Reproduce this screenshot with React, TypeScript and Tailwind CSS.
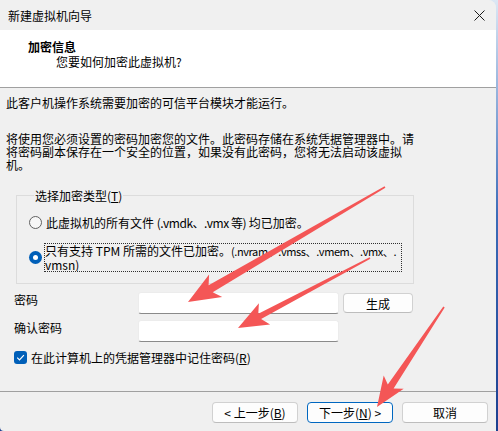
import React from 'react';

// tapered red pointer: thin tail at (sx, sy), head tip at (tx, ty)
function arrowPoints(sx: number, sy: number, tx: number, ty: number, head = 30, wing = 12, neck = 3.5, tail = 0.8) {
  const dx = sx - tx;
  const dy = sy - ty;
  const len = Math.hypot(dx, dy);
  const ux = dx / len;
  const uy = dy / len;
  const nx = -uy;
  const ny = ux;
  const bx = tx + ux * head;
  const by = ty + uy * head;
  const ix = tx + ux * head * 0.82;
  const iy = ty + uy * head * 0.82;
  const pts = [
    [sx + nx * tail, sy + ny * tail],
    [ix + nx * neck, iy + ny * neck],
    [bx + nx * wing, by + ny * wing],
    [tx, ty],
    [bx - nx * wing, by - ny * wing],
    [ix - nx * neck, iy - ny * neck],
    [sx - nx * tail, sy - ny * tail],
  ];
  return pts.map((p) => p.map((v) => v.toFixed(1)).join(',')).join(' ');
}

function Radio({ checked }: { checked?: boolean }) {
  if (checked) {
    return (
      <span className="flex h-[13px] w-[13px] shrink-0 items-center justify-center rounded-full bg-[#005fb8]">
        <span className="h-[5px] w-[5px] rounded-full bg-white" />
      </span>
    );
  }
  return <span className="h-[13px] w-[13px] shrink-0 rounded-full border border-[#616161] bg-[#f7f7f7]" />;
}

function Button({ children, primary }: { children: React.ReactNode; primary?: boolean }) {
  return (
    <button
      className={
        primary
          ? 'h-[21px] w-[86px] rounded-[4px] border border-[#0067c0] bg-[#fdfdfd] text-[12px] leading-[13px] text-black'
          : 'h-[21px] w-[86px] rounded-[4px] border border-[#d1d1d1] border-b-[#bdbdbd] bg-[#fdfdfd] text-[12px] leading-[13px] text-black'
      }
    >
      {children}
    </button>
  );
}

function TextBox() {
  return <div className="w-[201px] h-[22px] rounded-[3px] border border-[#ececec] border-b-[#8a8a8a] bg-white" />;
}

export default function App() {
  return (
    <div className="relative h-[431px] w-[498px] overflow-hidden bg-linear-to-b from-[#dce7f4] via-[#3c6cb8] to-[#1c3f8f] font-['Noto_Sans_CJK_SC',sans-serif] text-[12px] text-black">
      <div className="flex h-[431px] w-[496px] flex-col overflow-hidden rounded-tr-[8px] rounded-bl-[4px] bg-[#f0f0f0]">
        {/* title bar */}
        <div className="flex h-[30px] shrink-0 items-center justify-between bg-[#f0f0f0] pl-[8px] pr-[10px]">
          <span className="leading-[13px]">新建虚拟机向导</span>
          <svg width="11" height="11" viewBox="0 0 11 11" className="mr-[1px]">
            <path d="M0.5 0.5 L10.5 10.5 M10.5 0.5 L0.5 10.5" stroke="#1b1b1b" strokeWidth="1" />
          </svg>
        </div>

        {/* page header */}
        <div className="h-[58px] shrink-0 border-b border-[#a0a0a0] bg-white pt-[10px]">
          <div className="pl-[28px] font-bold leading-[13px]">加密信息</div>
          <div className="mt-[2px] pl-[56px] leading-[13px]">您要如何加密此虚拟机?</div>
        </div>

        {/* page body */}
        <div className="flex flex-1 flex-col px-[6px] pt-[8px]">
          <p className="leading-[13px]">此客户机操作系统需要加密的可信平台模块才能运行。</p>
          <p className="mt-[23px] leading-[13px]">
            将使用您必须设置的密码加密您的文件。此密码存储在系统凭据管理器中。请
            <br />
            将密码副本保存在一个安全的位置，如果没有此密码，您将无法启动该虚拟
            <br />
            机。
          </p>

          <fieldset className="mt-[18px] ml-[10px] h-[95px] w-[398px] border border-[#dcdcdc] pl-[12px]">
            <legend className="ml-[5px] px-[1px] leading-[13px]">
              选择加密类型(<u>T</u>)
            </legend>
            <div className="mt-[14px] flex items-center gap-[3px]">
              <Radio />
              <span className="whitespace-nowrap pl-[1px] leading-[13px]">
                此虚拟机的所有文件 <span className="tracking-[-0.5px]">(.vmdk、.vmx 等)</span> 均已加密。
              </span>
            </div>
            <div className="mt-[14px] flex items-center gap-[2px]">
              <Radio checked />
              <div className="w-[358px] overflow-hidden whitespace-nowrap border border-dotted border-[#303030] leading-[13px]">
                只有支持 TPM 所需的文件已加密。
                <span className="text-[11px] tracking-[-0.4px]">(.nvram、.vmss、.vmem、.vmx、.</span>
                <br />
                vmsn)
              </div>
            </div>
          </fieldset>

          <div className="mt-[8px] flex items-start">
            <span className="ml-[8px] mt-[1px] w-[124px] leading-[13px]">密码</span>
            <TextBox />
            <div className="ml-[4px] mt-[1px]">
              <button className="h-[20px] w-[70px] rounded-[4px] border border-[#d1d1d1] border-b-[#bdbdbd] bg-[#fdfdfd] leading-[13px]">生成</button>
            </div>
          </div>

          <div className="mt-[6px] flex items-start">
            <span className="ml-[8px] mt-[1px] w-[124px] leading-[13px]">确认密码</span>
            <TextBox />
          </div>

          <div className="mt-[9px] ml-[8px] flex items-center gap-[4px]">
            <span className="flex h-[13px] w-[13px] items-center justify-center rounded-[3px] bg-[#005fb8]">
              <svg width="9" height="9" viewBox="0 0 9 9">
                <path d="M1.2 4.6 L3.5 6.9 L7.9 2.2" fill="none" stroke="white" strokeWidth="1.2" />
              </svg>
            </span>
            <span className="leading-[13px]">
              在此计算机上的凭据管理器中记住密码(<u>R</u>)
            </span>
          </div>
        </div>

        {/* wizard buttons */}
        <div className="flex h-[40px] shrink-0 items-start justify-end gap-[9px] border-t border-[#a0a0a0] pr-[8px] pt-[10px]">
          <Button>
            &lt; 上一步(<u>B</u>)
          </Button>
          <Button primary>
            下一步(<u>N</u>) &gt;
          </Button>
          <Button>取消</Button>
        </div>
      </div>

      {/* red pointers drawn on top */}
      <svg className="pointer-events-none absolute left-0 top-0" width="498" height="431">
        <polygon points={arrowPoints(385, 187, 188, 302, 32, 13, 4, 0.8)} fill="#f45656" />
        <polygon points={arrowPoints(370, 258, 238, 328, 30, 12, 3, 0.8)} fill="#f45656" />
        <polygon points={arrowPoints(444, 307, 377, 407, 30, 12, 3.5, 0.8)} fill="#f45656" />
      </svg>
    </div>
  );
}
